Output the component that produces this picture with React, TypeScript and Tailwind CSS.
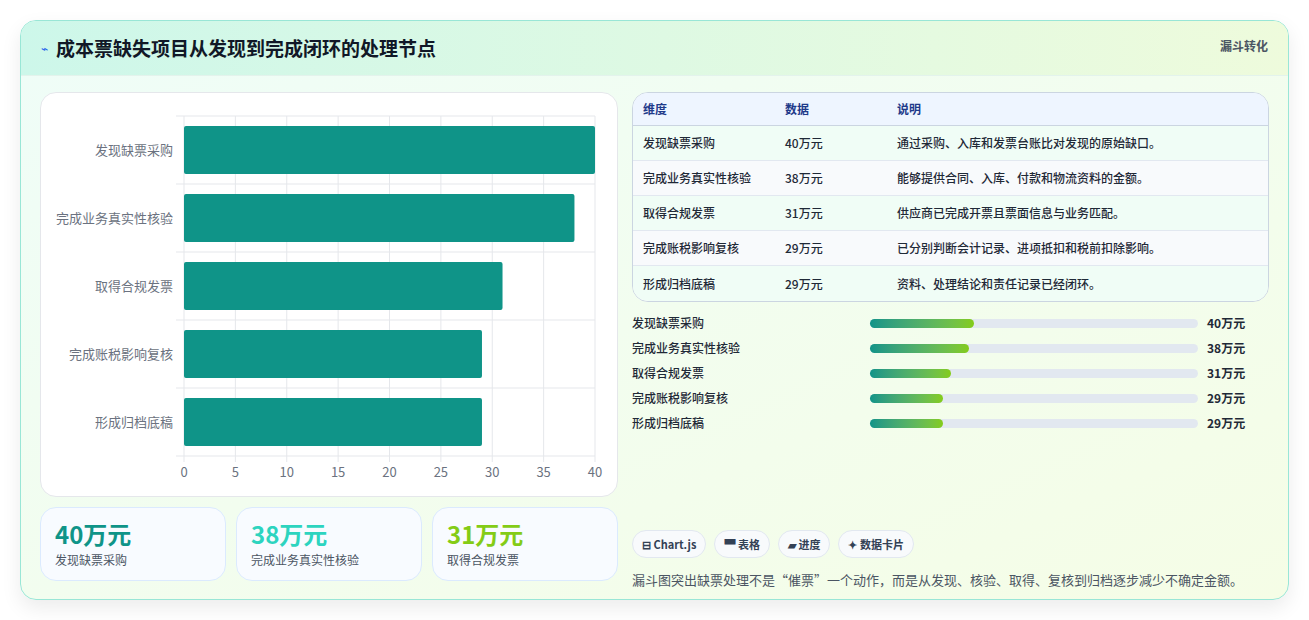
import React from "react";

const rows = [
  ["发现缺票采购", 40, "通过采购、入库和发票台账比对发现的原始缺口。", 104],
  ["完成业务真实性核验", 38, "能够提供合同、入库、付款和物流资料的金额。", 99],
  ["取得合规发票", 31, "供应商已完成开票且票面信息与业务匹配。", 81],
  ["完成账税影响复核", 29, "已分别判断会计记录、进项抵扣和税前扣除影响。", 73],
  ["形成归档底稿", 29, "资料、处理结论和责任记录已经闭环。", 73],
] as const;

function Chart() {
  const x0 = 143, sc = 10.275, top = 23, band = 68;
  return (
    <svg width="577" height="402" className="block">
      {[0, 5, 10, 15, 20, 25, 30, 35, 40].map((t) => (
        <g key={t}>
          <line x1={x0 + t * sc} x2={x0 + t * sc} y1={top} y2={top + band * 5 + 6} stroke="#e5e7eb" />
          <text x={x0 + t * sc} y={384} textAnchor="middle" fontSize="13" fill="#6b7280">{t}</text>
        </g>
      ))}
      {[0, 1, 2, 3, 4, 5].map((i) => (
        <line key={i} x1={x0 - 8} x2={x0 + 40 * sc} y1={top + i * band} y2={top + i * band} stroke="#e5e7eb" />
      ))}
      {rows.map((r, i) => (
        <g key={i}>
          <rect x={x0} y={top + i * band + 10} width={r[1] * sc} height={48} fill="#0f9488" rx="2" />
          <text x={132} y={top + i * band + 39} textAnchor="end" fontSize="13" fill="#6b7280">{r[0]}</text>
        </g>
      ))}
    </svg>
  );
}

export default function App() {
  return (
    <div className="w-[1309px] h-[620px] bg-white pt-5 px-5" style={{ fontFamily: '"Noto Sans CJK SC", "Noto Sans", sans-serif' }}>
      <div className="h-[580px] rounded-2xl border border-[#99e6d6] bg-gradient-to-br from-[#effdf8] to-[#f5fde6] overflow-hidden shadow-[0_8px_20px_rgba(0,0,0,0.08)]">
        <div className="h-[55px] flex items-start justify-between px-5 pt-[15px] bg-gradient-to-r from-[#cdf7ea] to-[#eefbdc] border-b border-[#e3f3ec]">
          <div className="flex items-center gap-2">
            <span className="text-[#2563eb] text-xs">⌁</span>
            <span className="text-[19px] font-bold text-[#111827] leading-6">成本票缺失项目从发现到完成闭环的处理节点</span>
          </div>
          <span className="text-xs font-bold text-[#4b5563] mt-[2px]">漏斗转化</span>
        </div>
        <div className="flex gap-[14px] px-[19px] pt-4">
          <div className="w-[578px] flex flex-col gap-[10px]">
            <div className="h-[405px] rounded-2xl bg-white border border-[#e5e7eb]">
              <Chart />
            </div>
            <div className="flex gap-[10px]">
              {[["40万元", "#0f9488"], ["38万元", "#2dd4bf"], ["31万元", "#84cc16"]].map(([v, c], i) => (
                <div key={i} className="flex-1 h-[74px] rounded-2xl bg-[#f8fbff] border border-[#dbeafe] px-[14px] pt-[10px]">
                  <div className="text-[24px] font-bold leading-8" style={{ color: c }}>{v}</div>
                  <div className="text-xs text-[#4b5563] mt-[2px]">{rows[i][0]}</div>
                </div>
              ))}
            </div>
          </div>
          <div className="flex-1 flex flex-col">
            <div className="rounded-2xl border border-[#cbd5e1] bg-white overflow-hidden text-xs">
              <div className="flex h-[33px] items-center bg-[#eef5ff] border-b border-[#cbd5e1] font-bold text-[#1e3a8a]">
                <div className="w-[152px] pl-[10px]">维度</div>
                <div className="w-[112px]">数据</div>
                <div>说明</div>
              </div>
              {rows.map((r, i) => (
                <div key={i} className={`flex h-[35px] items-center text-[#1f2937] font-medium ${i % 2 ? "bg-[#f8fafc]" : "bg-[#f0fdf6]"} ${i < 4 ? "border-b border-[#e2e8f0]" : ""}`}>
                  <div className="w-[152px] pl-[10px]">{r[0]}</div>
                  <div className="w-[112px]">{r[1]}万元</div>
                  <div>{r[2]}</div>
                </div>
              ))}
            </div>
            <div className="mt-[12px] flex flex-col gap-[7px]">
              {rows.map((r, i) => (
                <div key={i} className="flex items-center h-[18px] text-xs font-medium text-[#1f2937]">
                  <div className="w-[238px]">{r[0]}</div>
                  <div className="w-[328px] h-[9px] rounded-full bg-[#e2e8f0]">
                    <div className="h-full rounded-full bg-gradient-to-r from-[#0f9488] to-[#84cc16]" style={{ width: r[3] }} />
                  </div>
                  <div className="ml-[9px] font-bold">{r[1]}万元</div>
                </div>
              ))}
            </div>
            <div className="mt-[98px] flex gap-2">
              {["⊟ Chart.js", "▀ 表格", "▰ 进度", "✦ 数据卡片"].map((t) => (
                <span key={t} className="h-[28px] px-[9px] flex items-center rounded-full bg-[#f8fafc] border border-[#e2e8f0] text-[11px] font-bold text-[#334155]">{t}</span>
              ))}
            </div>
            <div className="mt-[12px] text-[13px] text-[#4b5563]">漏斗图突出缺票处理不是“催票”一个动作，而是从发现、核验、取得、复核到归档逐步减少不确定金额。</div>
          </div>
        </div>
      </div>
    </div>
  );
}
